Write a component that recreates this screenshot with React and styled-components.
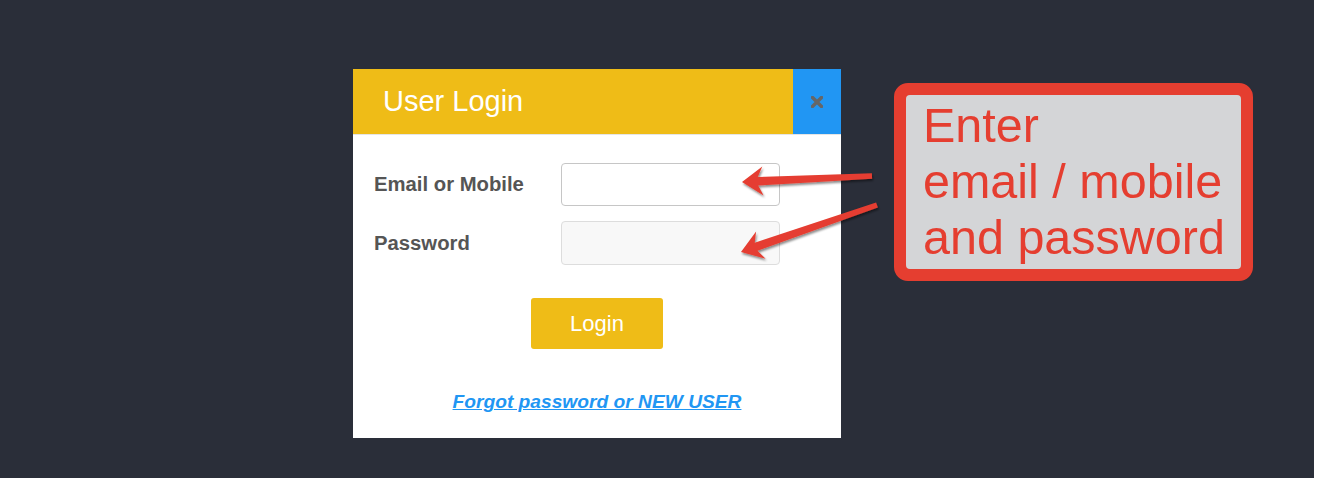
import React from "react";
import styled, { createGlobalStyle } from "styled-components";

const GlobalStyle = createGlobalStyle`
  html, body {
    margin: 0;
    padding: 0;
    background: #ffffff;
  }
  body {
    font-family: "Liberation Sans", Arial, sans-serif;
  }
`;

// builds a tapered arrow polygon from tail to tip
function arrowPoints(tail, tip, headLen = 19, headHalf = 14.5, neck = 4.3, tailHalf = 2.8) {
  const dx = tip[0] - tail[0];
  const dy = tip[1] - tail[1];
  const len = Math.hypot(dx, dy);
  const ux = dx / len;
  const uy = dy / len;
  const nx = -uy;
  const ny = ux;
  const at = (back, side) => [
    tip[0] - ux * back + nx * side,
    tip[1] - uy * back + ny * side,
  ];
  const pts = [
    tip,
    at(headLen + 2, headHalf),
    at(headLen - 3, neck),
    [tail[0] + nx * tailHalf, tail[1] + ny * tailHalf],
    [tail[0] - nx * tailHalf, tail[1] - ny * tailHalf],
    at(headLen - 3, -neck),
    at(headLen + 2, -headHalf),
  ];
  return pts.map((p) => p[0].toFixed(1) + "," + p[1].toFixed(1)).join(" ");
}

export default function App() {
  return (
    <Page>
      <GlobalStyle />
      <Stage>
        <Modal>
          <Header>
            <Title>User Login</Title>
            <CloseButton type="button" aria-label="Close">
              <svg width="12" height="12" viewBox="0 0 12 12">
                <path d="M1.5 1.5 L10.5 10.5 M10.5 1.5 L1.5 10.5" stroke="#666" strokeWidth="3.4" strokeLinecap="square" />
              </svg>
            </CloseButton>
          </Header>
          <Body>
            <FormGrid>
              <Label htmlFor="email">Email or Mobile</Label>
              <Field id="email" type="text" />
              <Label htmlFor="password">Password</Label>
              <Field id="password" type="password" $filled />
            </FormGrid>
            <LoginButton type="button">Login</LoginButton>
            <ForgotLink href="#">Forgot password or NEW USER</ForgotLink>
          </Body>
        </Modal>

        <Callout>
          <CalloutText>
            Enter
            <br />
            email / mobile
            <br />
            and password
          </CalloutText>
        </Callout>

        <Arrows width="1314" height="478" viewBox="0 0 1314 478">
          <defs>
            <filter id="arrowShadow" x="-10%" y="-30%" width="120%" height="160%">
              <feDropShadow dx="1" dy="2" stdDeviation="1.2" floodColor="#000" floodOpacity="0.45" />
            </filter>
          </defs>
          <polygon
            points={arrowPoints([872, 176], [742, 182])}
            fill="#e53e30"
            filter="url(#arrowShadow)"
          />
          <polygon
            points={arrowPoints([877, 205], [741, 252])}
            fill="#e53e30"
            filter="url(#arrowShadow)"
          />
        </Arrows>
      </Stage>
    </Page>
  );
}

const Page = styled.div`
  display: flex;
  height: 478px;
  background: #ffffff;
`;

const Stage = styled.div`
  position: relative;
  width: 1314px;
  height: 478px;
  background: #2a2e39;
  display: flex;
  align-items: flex-start;
  padding: 69px 0 0 353px;
  box-sizing: border-box;
  gap: 53px;
`;

const Modal = styled.div`
  width: 488px;
  background: #ffffff;
  display: flex;
  flex-direction: column;
`;

const Header = styled.div`
  display: flex;
  height: 65px;
  border-bottom: 1px solid #e5e5e5;
`;

const Title = styled.h4`
  flex: 1;
  margin: 0;
  padding-left: 30px;
  display: flex;
  align-items: center;
  background: #efbc17;
  color: #ffffff;
  font-size: 29px;
  font-weight: normal;
`;

const CloseButton = styled.button`
  width: 48px;
  border: 0;
  padding: 0;
  background: #2196f3;
  display: flex;
  align-items: center;
  justify-content: center;
  cursor: pointer;
`;

const Body = styled.div`
  display: flex;
  flex-direction: column;
  align-items: center;
  padding: 28px 0 25px 0;
`;

const FormGrid = styled.div`
  align-self: stretch;
  display: grid;
  grid-template-columns: 187px 219px;
  row-gap: 15px;
  align-items: center;
  padding-left: 21px;
`;

const Label = styled.label`
  color: #555555;
  font-size: 20.3px;
  font-weight: bold;
`;

const Field = styled.input`
  box-sizing: border-box;
  width: 219px;
  height: ${(p) => (p.$filled ? "44px" : "43px")};
  border: 1px solid ${(p) => (p.$filled ? "#dddddd" : "#c6c6c6")};
  border-radius: 4px;
  background: ${(p) => (p.$filled ? "#f8f8f8" : "#ffffff")};
  font-size: 16px;
  padding: 0 10px;
  outline: none;
`;

const LoginButton = styled.button`
  margin-top: 33px;
  width: 132px;
  height: 51px;
  border: 0;
  border-radius: 3px;
  background: #efbc17;
  color: #ffffff;
  font-family: "Liberation Sans", Arial, sans-serif;
  font-size: 22px;
  cursor: pointer;
`;

const ForgotLink = styled.a`
  margin-top: 42px;
  color: #2196f3;
  font-size: 19.2px;
  line-height: 22px;
  font-weight: bold;
  font-style: italic;
  text-decoration: underline;
`;

const Callout = styled.div`
  margin-top: 14px;
  width: 359px;
  box-sizing: border-box;
  border: 12px solid #e53e30;
  border-radius: 14px;
  background: #e53e30;
`;

const CalloutText = styled.div`
  background: #d4d5d7;
  border-radius: 4px;
  padding: 2px 0 4px 17px;
  color: #e53e30;
  font-size: 48.5px;
  line-height: 56px;
  white-space: nowrap;
`;

const Arrows = styled.svg`
  position: absolute;
  left: 0;
  top: 0;
  pointer-events: none;
`;
